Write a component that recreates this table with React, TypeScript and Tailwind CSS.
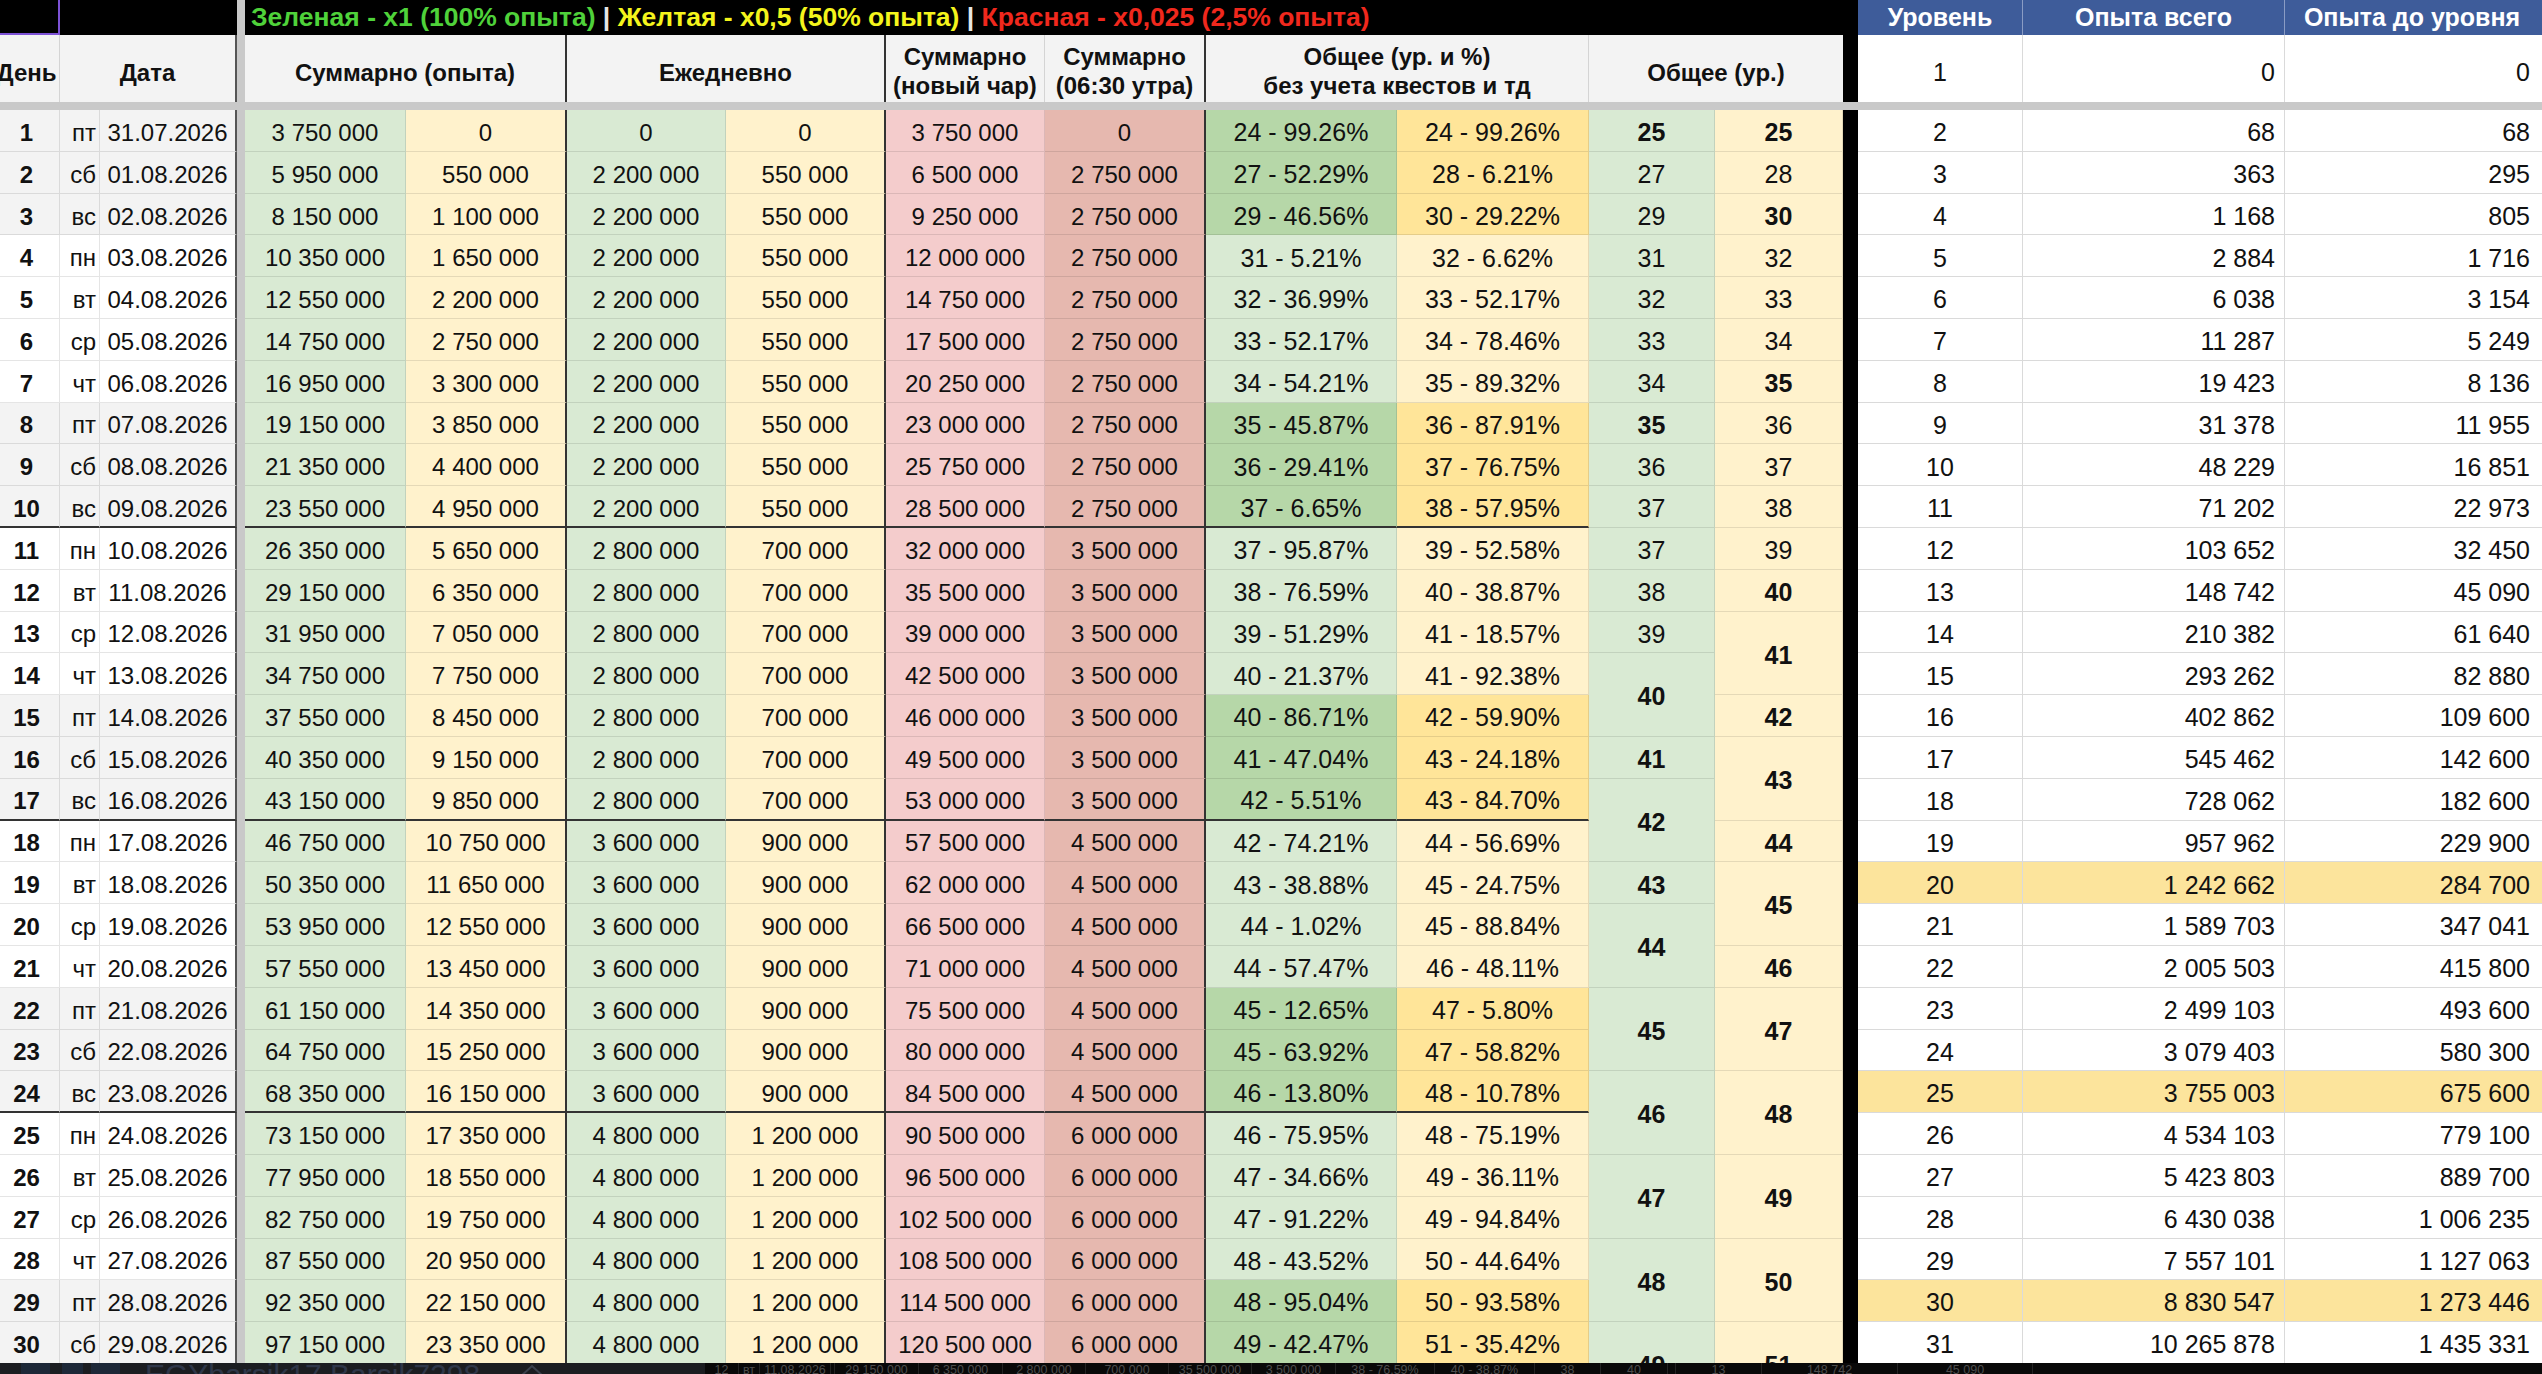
import React from 'react';

type UR = [number, number, boolean];

const WD = ['пт', 'сб', 'вс', 'пн', 'вт', 'ср', 'чт'];

const PG = ['24 - 99.26%', '27 - 52.29%', '29 - 46.56%', '31 - 5.21%', '32 - 36.99%', '33 - 52.17%', '34 - 54.21%', '35 - 45.87%', '36 - 29.41%', '37 - 6.65%', '37 - 95.87%', '38 - 76.59%', '39 - 51.29%', '40 - 21.37%', '40 - 86.71%', '41 - 47.04%', '42 - 5.51%', '42 - 74.21%', '43 - 38.88%', '44 - 1.02%', '44 - 57.47%', '45 - 12.65%', '45 - 63.92%', '46 - 13.80%', '46 - 75.95%', '47 - 34.66%', '47 - 91.22%', '48 - 43.52%', '48 - 95.04%', '49 - 42.47%'];
const PY = ['24 - 99.26%', '28 - 6.21%', '30 - 29.22%', '32 - 6.62%', '33 - 52.17%', '34 - 78.46%', '35 - 89.32%', '36 - 87.91%', '37 - 76.75%', '38 - 57.95%', '39 - 52.58%', '40 - 38.87%', '41 - 18.57%', '41 - 92.38%', '42 - 59.90%', '43 - 24.18%', '43 - 84.70%', '44 - 56.69%', '45 - 24.75%', '45 - 88.84%', '46 - 48.11%', '47 - 5.80%', '47 - 58.82%', '48 - 10.78%', '48 - 75.19%', '49 - 36.11%', '49 - 94.84%', '50 - 44.64%', '50 - 93.58%', '51 - 35.42%'];

const UG: UR[] = [
  [25, 1, true], [27, 1, false], [29, 1, false], [31, 1, false], [32, 1, false], [33, 1, false], [34, 1, false], [35, 1, true], [36, 1, false], [37, 1, false], [37, 1, false], [38, 1, false], [39, 1, false],
  [40, 2, true], [41, 1, true], [42, 2, true], [43, 1, true], [44, 2, true], [45, 2, true], [46, 2, true], [47, 2, true], [48, 2, true], [49, 2, true],
];
const UY: UR[] = [
  [25, 1, true], [28, 1, false], [30, 1, true], [32, 1, false], [33, 1, false], [34, 1, false], [35, 1, true], [36, 1, false], [37, 1, false], [38, 1, false], [39, 1, false], [40, 1, true],
  [41, 2, true], [42, 1, true], [43, 2, true], [44, 1, true], [45, 2, true], [46, 1, true], [47, 2, true], [48, 2, true], [49, 2, true], [50, 2, true], [51, 2, true],
];

const RIGHT: [number, string, string][] = [
  [2, '68', '68'], [3, '363', '295'], [4, '1 168', '805'], [5, '2 884', '1 716'], [6, '6 038', '3 154'], [7, '11 287', '5 249'], [8, '19 423', '8 136'], [9, '31 378', '11 955'], [10, '48 229', '16 851'], [11, '71 202', '22 973'],
  [12, '103 652', '32 450'], [13, '148 742', '45 090'], [14, '210 382', '61 640'], [15, '293 262', '82 880'], [16, '402 862', '109 600'], [17, '545 462', '142 600'], [18, '728 062', '182 600'], [19, '957 962', '229 900'], [20, '1 242 662', '284 700'], [21, '1 589 703', '347 041'],
  [22, '2 005 503', '415 800'], [23, '2 499 103', '493 600'], [24, '3 079 403', '580 300'], [25, '3 755 003', '675 600'], [26, '4 534 103', '779 100'], [27, '5 423 803', '889 700'], [28, '6 430 038', '1 006 235'], [29, '7 557 101', '1 127 063'], [30, '8 830 547', '1 273 446'], [31, '10 265 878', '1 435 331'],
];

const fmt = (n: number) => String(n).replace(/\B(?=(\d{3})+(?!\d))/g, ' ');

type Row = {
  i: number; wd: string; date: string; weekend: boolean; heavy: boolean;
  sg: string; sy: string; dg: string; dy: string; r1: string; r2: string; pg: string; py: string;
};

const ROWS: Row[] = (() => {
  const out: Row[] = [];
  let sg = 3750000;
  let sy = 0;
  for (let i = 1; i <= 30; i++) {
    const d: [number, number] = i === 1 ? [0, 0] : i <= 10 ? [2200000, 550000] : i <= 17 ? [2800000, 700000] : i <= 24 ? [3600000, 900000] : [4800000, 1200000];
    if (i > 1) { sg += d[0]; sy += d[1]; }
    const date = i === 1 ? '31.07.2026' : `${String(i - 1).padStart(2, '0')}.08.2026`;
    out.push({
      i, wd: WD[(i - 1) % 7], date, weekend: (i - 1) % 7 < 3, heavy: i === 10 || i === 17 || i === 24,
      sg: fmt(sg), sy: fmt(sy), dg: fmt(d[0]), dy: fmt(d[1]), r1: fmt(sg + sy), r2: fmt(d[0] + d[1]), pg: PG[i - 1], py: PY[i - 1],
    });
  }
  return out;
})();

const LIGHT_R = 'border-r border-r-black/10';
const DARK_R = 'border-r-2 border-r-[#333]';

function Cell({ cls, children }: { cls: string; children?: React.ReactNode }) {
  return <div className={`flex h-full shrink-0 items-center pt-[5px] ${cls}`}>{children}</div>;
}

function FrozenLeft() {
  return (
    <div className="flex shrink-0 flex-col">
      {ROWS.map((r) => {
        const bot = r.heavy ? 'border-b-2 border-b-[#333]' : 'border-b border-b-black/10';
        const bg = r.weekend ? 'bg-[#f3f3f3]' : 'bg-white';
        return (
          <div key={r.i} className="flex h-[41.8px]">
            <Cell cls={`w-[66px] justify-center font-bold ${LIGHT_R} ${bot} ${bg}`}>{r.i}</Cell>
            <Cell cls={`w-[40px] justify-end pr-[3px] ${LIGHT_R} ${bot} ${bg}`}>{r.wd}</Cell>
            <Cell cls={`w-[137px] justify-center border-r-2 border-r-[#555] ${bot} ${bg}`}>{r.date}</Cell>
          </div>
        );
      })}
    </div>
  );
}

function Middle() {
  return (
    <div className="flex shrink-0 flex-col">
      {ROWS.map((r) => {
        const bot = r.heavy ? 'border-b-2 border-b-[#333]' : 'border-b border-b-black/10';
        return (
          <div key={r.i} className="flex h-[41.8px]">
            <Cell cls={`w-[161px] justify-center bg-[#d9ead3] ${LIGHT_R} ${bot}`}>{r.sg}</Cell>
            <Cell cls={`w-[161px] justify-center bg-[#fff2cc] ${DARK_R} ${bot}`}>{r.sy}</Cell>
            <Cell cls={`w-[159px] justify-center bg-[#d9ead3] ${LIGHT_R} ${bot}`}>{r.dg}</Cell>
            <Cell cls={`w-[160px] justify-center bg-[#fff2cc] ${DARK_R} ${bot}`}>{r.dy}</Cell>
            <Cell cls={`w-[159px] justify-center bg-[#f4cccc] ${LIGHT_R} ${bot}`}>{r.r1}</Cell>
            <Cell cls={`w-[161px] justify-center bg-[#e6b8af] ${DARK_R} ${bot}`}>{r.r2}</Cell>
            <Cell cls={`w-[191px] justify-center text-[25px] ${r.weekend ? 'bg-[#b6d7a8]' : 'bg-[#d9ead3]'} ${LIGHT_R} ${bot}`}>{r.pg}</Cell>
            <Cell cls={`w-[192px] justify-center text-[25px] ${r.weekend ? 'bg-[#ffe599]' : 'bg-[#fff2cc]'} ${LIGHT_R} ${bot}`}>{r.py}</Cell>
          </div>
        );
      })}
    </div>
  );
}

function UrColumn({ data, w, bg }: { data: UR[]; w: string; bg: string }) {
  return (
    <div className={`flex shrink-0 flex-col ${w}`}>
      {data.map(([v, span, b], k) => (
        <div
          key={k}
          className={`flex shrink-0 items-center justify-center pt-[5px] text-[25px] border-b border-b-black/10 ${LIGHT_R} ${bg} ${span === 2 ? 'h-[83.6px]' : 'h-[41.8px]'} ${b ? 'font-bold' : ''}`}
        >
          {v}
        </div>
      ))}
    </div>
  );
}

function RightTable() {
  return (
    <div className="flex shrink-0 flex-col">
      {RIGHT.map(([lv, tot, tl]) => {
        const hl = lv === 20 || lv === 25 || lv === 30;
        const bg = hl ? 'bg-[#fce49c]' : 'bg-white';
        return (
          <div key={lv} className={`flex h-[41.8px] text-[25px] ${bg}`}>
            <Cell cls="w-[165px] justify-center border-r border-b border-[#dadada]">{lv}</Cell>
            <Cell cls="w-[262px] justify-end pr-[9px] border-r border-b border-[#dadada]">{tot}</Cell>
            <Cell cls="w-[260px] justify-end pr-[15px] border-b border-[#dadada]">{tl}</Cell>
          </div>
        );
      })}
    </div>
  );
}

function GhostStrip() {
  const cells: [string, string][] = [
    ['w-[34px]', '12'], ['w-[21px]', 'вт'], ['w-[71px]', '11.08.2026'], ['w-[4px]', ''],
    ['w-[84px]', '29 150 000'], ['w-[84px]', '6 350 000'], ['w-[83px]', '2 800 000'], ['w-[83px]', '700 000'],
    ['w-[83px]', '35 500 000'], ['w-[84px]', '3 500 000'], ['w-[99px]', '38 - 76.59%'], ['w-[100px]', '40 - 38.87%'],
    ['w-[66px]', '38'], ['w-[67px]', '40'], ['w-[8px]', ''], ['w-[86px]', '13'], ['w-[136px]', '148 742'], ['w-[135px]', '45 090'],
  ];
  return (
    <div className="flex h-full flex-1 bg-[#090909]">
      {cells.map(([w, t], k) => (
        <div key={k} className={`flex h-full shrink-0 justify-center overflow-hidden border-r border-r-[#242424] ${w}`}>
          <span className="mt-[1px] text-[12.5px] leading-[13px] text-[#4d4d4d]">{t}</span>
        </div>
      ))}
    </div>
  );
}

export default function App() {
  return (
    <div className="relative h-[1374px] w-[2542px] overflow-hidden whitespace-nowrap bg-white font-['Liberation_Sans',Arial,sans-serif] text-[24px] text-[#111]">
      <div className="-ml-[6px] flex w-[2551px] flex-col">
        {/* Top black bar */}
        <div className="flex h-[35px]">
          <div className="w-[66px] shrink-0 border-r-2 border-b-2 border-[#7d52d6] bg-black" />
          <div className="w-[177px] shrink-0 bg-black" />
          <div className="w-[8px] shrink-0 bg-[#c9c9c9]" />
          <div className="flex w-[1598px] shrink-0 items-center bg-black pl-[6px] text-[26.5px] font-bold">
            <span className="text-[#4fd23a]">Зеленая - x1 (100% опыта)</span>
            <span className="text-[#e6e6e6]">&nbsp;|&nbsp;</span>
            <span className="text-[#f4f41c]">Желтая - x0,5 (50% опыта)</span>
            <span className="text-[#e6e6e6]">&nbsp;|&nbsp;</span>
            <span className="text-[#f0281d]">Красная - x0,025 (2,5% опыта)</span>
          </div>
          <div className="w-[15px] shrink-0 bg-black" />
          <div className="flex w-[165px] shrink-0 items-center justify-center border-r border-r-[#8a9cc4] bg-[#3e5c9a] text-[25px] font-bold text-white">Уровень</div>
          <div className="flex w-[262px] shrink-0 items-center justify-center border-r border-r-[#8a9cc4] bg-[#3e5c9a] text-[25px] font-bold text-white">Опыта всего</div>
          <div className="flex w-[260px] shrink-0 items-center justify-center bg-[#3e5c9a] pr-[6px] text-[25px] font-bold text-white">Опыта до уровня</div>
        </div>

        {/* Header row */}
        <div className="flex h-[67px] font-bold">
          <div className="flex w-[66px] shrink-0 items-center justify-center border-r border-r-[#d4d4d4] bg-[#f3f3f3] pt-[8px]">День</div>
          <div className="flex w-[177px] shrink-0 items-center justify-center border-r-2 border-r-[#555] bg-[#f3f3f3] pt-[8px]">Дата</div>
          <div className="w-[8px] shrink-0 bg-[#c9c9c9]" />
          <div className="flex w-[322px] shrink-0 items-center justify-center bg-[#f3f3f3] pt-[8px] border-r-2 border-r-[#333]">Суммарно (опыта)</div>
          <div className="flex w-[319px] shrink-0 items-center justify-center bg-[#f3f3f3] pt-[8px] border-r-2 border-r-[#333]">Ежедневно</div>
          <div className="flex w-[159px] shrink-0 flex-col items-center justify-center border-r border-r-[#d4d4d4] bg-[#f3f3f3] pt-[4px] leading-[29px]">
            <span>Суммарно</span>
            <span>(новый чар)</span>
          </div>
          <div className="flex w-[161px] shrink-0 flex-col items-center justify-center bg-[#f3f3f3] pt-[4px] leading-[29px] border-r-2 border-r-[#333]">
            <span>Суммарно</span>
            <span>(06:30 утра)</span>
          </div>
          <div className="flex w-[383px] shrink-0 flex-col items-center justify-center border-r border-r-[#d4d4d4] bg-[#f3f3f3] pt-[4px] leading-[29px]">
            <span>Общее (ур. и %)</span>
            <span>без учета квестов и тд</span>
          </div>
          <div className="flex w-[254px] shrink-0 items-center justify-center bg-[#f3f3f3] pt-[8px]">Общее (ур.)</div>
          <div className="w-[15px] shrink-0 bg-black" />
          <div className="flex w-[165px] shrink-0 items-center justify-center border-r border-r-[#dadada] bg-white pt-[8px] text-[25px] font-normal">1</div>
          <div className="flex w-[262px] shrink-0 items-center justify-end border-r border-r-[#dadada] bg-white pr-[9px] pt-[8px] text-[25px] font-normal">0</div>
          <div className="flex w-[260px] shrink-0 items-center justify-end bg-white pr-[15px] pt-[8px] text-[25px] font-normal">0</div>
        </div>

        {/* Frozen horizontal divider */}
        <div className="h-[8px] w-full bg-[#c9c9c9]" />

        {/* Body */}
        <div className="flex">
          <FrozenLeft />
          <div className="w-[8px] shrink-0 self-stretch bg-[#c9c9c9]" />
          <Middle />
          <UrColumn data={UG} w="w-[126px]" bg="bg-[#d9ead3]" />
          <UrColumn data={UY} w="w-[128px]" bg="bg-[#fff2cc]" />
          <div className="w-[15px] shrink-0 self-stretch bg-black" />
          <RightTable />
        </div>
      </div>

      {/* Bottom dark strip (overlay) */}
      <div className="absolute bottom-0 left-0 flex h-[11px] w-full overflow-hidden">
        <div className="flex h-full w-[705px] shrink-0 bg-[#1b1d21]">
          <div className="ml-[21px] h-full w-[29px] bg-[#1d2838]" />
          <div className="ml-[12px] h-full w-[21px] bg-[#1d2838]" />
          <div className="ml-[8px] h-full w-[29px] bg-[#1d2838]" />
          <span className="-mt-[3px] ml-[25px] text-[30px] leading-[30px] text-[#2f3749]">EGYbarsik17 Barsik7298</span>
          <svg className="ml-[38px] mt-[1px] h-[14px] w-[28px]" viewBox="0 0 28 14">
            <path d="M2 13 L14 2 L26 13" fill="none" stroke="#3a404c" strokeWidth="2" />
          </svg>
        </div>
        <GhostStrip />
      </div>
    </div>
  );
}
